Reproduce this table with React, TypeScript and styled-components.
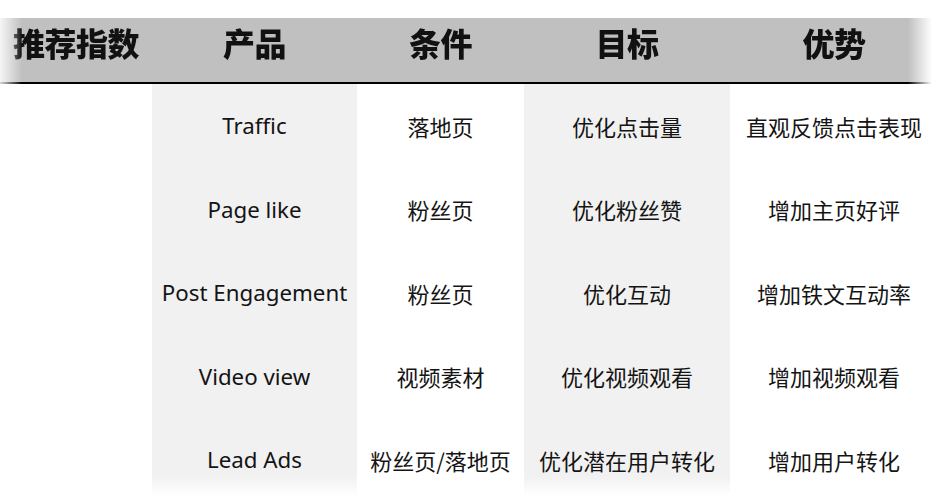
import styled, { createGlobalStyle } from "styled-components";

const GlobalStyle = createGlobalStyle`
  html, body {
    margin: 0;
    padding: 0;
    background: #ffffff;
  }
  body {
    font-family: "Noto Sans CJK SC", "Noto Sans", sans-serif;
    color: #111111;
  }
`;

const Page = styled.div`
  width: 938px;
  height: 503px;
  padding-top: 18px;
  box-sizing: border-box;
  overflow: hidden;
`;

const COLS = "152px 205px 167px 206px 208px";

const HeaderBar = styled.div`
  display: grid;
  grid-template-columns: ${COLS};
  height: 64px;
  background: #c0c0c0;
  border-bottom: 2px solid #000;
  box-shadow: 0 -4px 10px rgba(0, 0, 0, 0.16);
  -webkit-mask-image: linear-gradient(
    to right,
    rgba(0, 0, 0, 0.15) 0,
    #000 22px,
    #000 908px,
    transparent 932px
  );
  mask-image: linear-gradient(
    to right,
    rgba(0, 0, 0, 0.15) 0,
    #000 22px,
    #000 908px,
    transparent 932px
  );
`;

const HeadCell = styled.div`
  display: flex;
  align-items: center;
  justify-content: center;
  font-size: 32px;
  font-weight: 900;
  color: #111;
  letter-spacing: -0.5px;
  padding-bottom: 16px;
  box-sizing: border-box;
`;

const Body = styled.div`
  display: grid;
  grid-template-columns: ${COLS};
`;

const Column = styled.div<{ $shade?: boolean }>`
  display: flex;
  flex-direction: column;
  background: ${(p) =>
    p.$shade
      ? "linear-gradient(to bottom, #f1f1f1 0, #f1f1f1 392px, #ffffff 412px)"
      : "transparent"};
`;

const Cell = styled.div`
  height: 83.5px;
  display: flex;
  align-items: center;
  justify-content: center;
  font-size: 22px;
  white-space: nowrap;
  color: #141414;
`;

const Latin = styled.span`
  font-family: "Noto Sans", "Open Sans", sans-serif;
  font-size: 22.3px;
`;

const headers = ["推荐指数", "产品", "条件", "目标", "优势"];

const rows = [
  ["Traffic", "落地页", "优化点击量", "直观反馈点击表现"],
  ["Page like", "粉丝页", "优化粉丝赞", "增加主页好评"],
  ["Post Engagement", "粉丝页", "优化互动", "增加铁文互动率"],
  ["Video view", "视频素材", "优化视频观看", "增加视频观看"],
  ["Lead Ads", "粉丝页/落地页", "优化潜在用户转化", "增加用户转化"],
];

const App = () => {
  return (
    <>
      <GlobalStyle />
      <Page>
        <HeaderBar>
          {headers.map((h) => (
            <HeadCell key={h}>{h}</HeadCell>
          ))}
        </HeaderBar>
        <Body>
          <Column />
          {[0, 1, 2, 3].map((c) => (
            <Column key={c} $shade={c === 0 || c === 2}>
              {rows.map((r, i) => (
                <Cell key={i}>{c === 0 ? <Latin>{r[c]}</Latin> : r[c]}</Cell>
              ))}
            </Column>
          ))}
        </Body>
      </Page>
    </>
  );
};

export default App;
